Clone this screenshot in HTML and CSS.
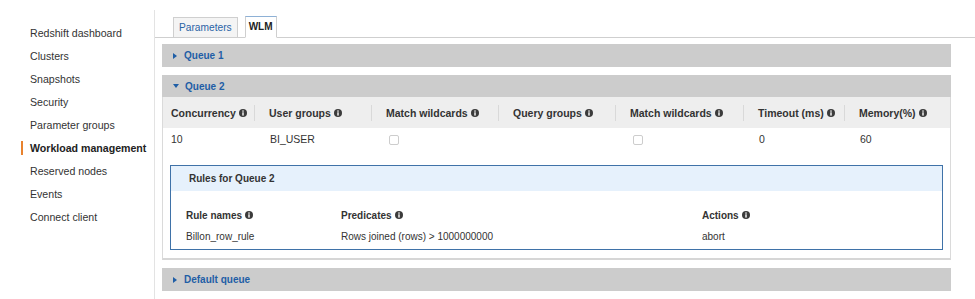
FILE: index.html
```html
<!DOCTYPE html>
<html>
<head>
<meta charset="utf-8">
<link rel="stylesheet" href="styles.css">
</head>
<body>
<nav class="sidebar">
  <div class="nav-item">Redshift dashboard</div>
  <div class="nav-item">Clusters</div>
  <div class="nav-item">Snapshots</div>
  <div class="nav-item">Security</div>
  <div class="nav-item">Parameter groups</div>
  <div class="nav-item active">Workload management</div>
  <div class="nav-item">Reserved nodes</div>
  <div class="nav-item">Events</div>
  <div class="nav-item">Connect client</div>
</nav>
<main class="main">
  <div class="tabs">
    <div class="tab">Parameters</div>
    <div class="tab tab-active">WLM</div>
  </div>
  <div class="content">
    <div class="qbar"><span class="tri-right"></span>Queue 1</div>

    <div class="panel">
      <div class="qbar qbar-in"><span class="tri-down"></span>Queue 2</div>
      <div class="qtable">
        <div class="th first">Concurrency<svg class="info" viewBox="0 0 8 8"><circle cx="4" cy="4" r="4" fill="#3b3b3b"/><rect x="3.3" y="1.4" width="1.4" height="1.3" fill="#fff"/><rect x="3.3" y="3.3" width="1.4" height="3.3" fill="#fff"/></svg></div>
        <div class="th">User groups<svg class="info" viewBox="0 0 8 8"><circle cx="4" cy="4" r="4" fill="#3b3b3b"/><rect x="3.3" y="1.4" width="1.4" height="1.3" fill="#fff"/><rect x="3.3" y="3.3" width="1.4" height="3.3" fill="#fff"/></svg></div>
        <div class="th">Match wildcards<svg class="info" viewBox="0 0 8 8"><circle cx="4" cy="4" r="4" fill="#3b3b3b"/><rect x="3.3" y="1.4" width="1.4" height="1.3" fill="#fff"/><rect x="3.3" y="3.3" width="1.4" height="3.3" fill="#fff"/></svg></div>
        <div class="th">Query groups<svg class="info" viewBox="0 0 8 8"><circle cx="4" cy="4" r="4" fill="#3b3b3b"/><rect x="3.3" y="1.4" width="1.4" height="1.3" fill="#fff"/><rect x="3.3" y="3.3" width="1.4" height="3.3" fill="#fff"/></svg></div>
        <div class="th">Match wildcards<svg class="info" viewBox="0 0 8 8"><circle cx="4" cy="4" r="4" fill="#3b3b3b"/><rect x="3.3" y="1.4" width="1.4" height="1.3" fill="#fff"/><rect x="3.3" y="3.3" width="1.4" height="3.3" fill="#fff"/></svg></div>
        <div class="th">Timeout (ms)<svg class="info" viewBox="0 0 8 8"><circle cx="4" cy="4" r="4" fill="#3b3b3b"/><rect x="3.3" y="1.4" width="1.4" height="1.3" fill="#fff"/><rect x="3.3" y="3.3" width="1.4" height="3.3" fill="#fff"/></svg></div>
        <div class="th">Memory(%)<svg class="info" viewBox="0 0 8 8"><circle cx="4" cy="4" r="4" fill="#3b3b3b"/><rect x="3.3" y="1.4" width="1.4" height="1.3" fill="#fff"/><rect x="3.3" y="3.3" width="1.4" height="3.3" fill="#fff"/></svg></div>

        <div class="td first">10</div>
        <div class="td">BI_USER</div>
        <div class="td"><span class="checkbox"></span></div>
        <div class="td"></div>
        <div class="td"><span class="checkbox"></span></div>
        <div class="td">0</div>
        <div class="td">60</div>
      </div>

      <div class="rules">
        <div class="rules-head">Rules for Queue 2</div>
        <div class="rules-grid">
          <div class="rh">Rule names<svg class="info" viewBox="0 0 8 8"><circle cx="4" cy="4" r="4" fill="#3b3b3b"/><rect x="3.3" y="1.4" width="1.4" height="1.3" fill="#fff"/><rect x="3.3" y="3.3" width="1.4" height="3.3" fill="#fff"/></svg></div>
          <div class="rh">Predicates<svg class="info" viewBox="0 0 8 8"><circle cx="4" cy="4" r="4" fill="#3b3b3b"/><rect x="3.3" y="1.4" width="1.4" height="1.3" fill="#fff"/><rect x="3.3" y="3.3" width="1.4" height="3.3" fill="#fff"/></svg></div>
          <div class="rh">Actions<svg class="info" viewBox="0 0 8 8"><circle cx="4" cy="4" r="4" fill="#3b3b3b"/><rect x="3.3" y="1.4" width="1.4" height="1.3" fill="#fff"/><rect x="3.3" y="3.3" width="1.4" height="3.3" fill="#fff"/></svg></div>
          <div class="rd">Billon_row_rule</div>
          <div class="rd">Rows joined (rows) &gt; 1000000000</div>
          <div class="rd">abort</div>
        </div>
      </div>
    </div>

    <div class="qbar"><span class="tri-right"></span>Default queue</div>
  </div>
</main>
</body>
</html>
```

FILE: styles.css
```css
html, body {
  margin: 0;
  padding: 0;
  background: #fff;
}
body {
  display: flex;
  font-family: "Liberation Sans", Arial, Helvetica, sans-serif;
  color: #333;
  height: 299px;
  overflow: hidden;
}
.sidebar {
  width: 154px;
  flex: none;
  margin-top: 10px;
  padding-top: 11px;
  border-right: 1px solid #e3e3e3;
}
.nav-item {
  display: flex;
  align-items: center;
  height: 23px;
  padding-left: 30px;
  font-size: 10.6px;
  color: #333;
}
.nav-item.active {
  font-weight: bold;
  color: #222;
}
.nav-item.active::before {
  content: "";
  width: 2px;
  height: 14px;
  background: #e8822e;
  margin-left: -9px;
  margin-right: 7px;
}
.main {
  flex: 1;
  min-width: 0;
}
.tabs {
  display: flex;
  align-items: flex-end;
  gap: 7px;
  height: 20px;
  padding: 17px 0 0 18px;
  border-bottom: 1px solid #cfcfcf;
}
.tab {
  height: 19px;
  line-height: 19px;
  padding: 0 5px;
  border: 1px solid #cfcfcf;
  border-bottom: none;
  background: #f4f4f4;
  color: #2a63a6;
  font-size: 10.2px;
}
.tab-active {
  height: 20px;
  line-height: 20px;
  padding: 0 3px;
  margin-bottom: -1px;
  border-top-color: #8eb1d6;
  border-bottom: 1px solid #fff;
  background: #fff;
  color: #222;
  font-weight: bold;
  font-size: 10px;
}
.content {
  padding: 6px 24px 0 7px;
  display: flex;
  flex-direction: column;
  gap: 8px;
}
.qbar {
  height: 23px;
  display: flex;
  align-items: center;
  padding-left: 11px;
  background: #cccccc;
  color: #1f5ea6;
  font-weight: bold;
  font-size: 10px;
}
.qbar-in {
  height: 22px;
  margin: 0 -1px;
}
.tri-right {
  width: 0;
  height: 0;
  border-top: 3px solid transparent;
  border-bottom: 3px solid transparent;
  border-left: 4px solid #1f5ea6;
  margin-right: 7px;
}
.tri-down {
  width: 0;
  height: 0;
  border-left: 3px solid transparent;
  border-right: 3px solid transparent;
  border-top: 4px solid #1f5ea6;
  margin-right: 6px;
}
.panel {
  border: 1px solid #dadada;
  border-top: none;
  border-bottom: 2px solid #d6d6d6;
  padding-bottom: 8px;
}
.qtable {
  display: grid;
  grid-template-columns: 91px 117px 127px 117px 128px 101px 1fr;
  grid-template-rows: 31px 22px;
  font-size: 10.5px;
}
.th {
  display: flex;
  align-items: center;
  background: #eeeeee;
  font-weight: bold;
  color: #333;
  white-space: nowrap;
}
.th::before {
  content: "";
  width: 1px;
  height: 16px;
  background: #d9d9d9;
  margin-right: 14px;
}
.th.first::before {
  display: none;
}
.th.first {
  padding-left: 8px;
}
.info {
  width: 8px;
  height: 8px;
  margin-left: 3px;
  flex: none;
}
.td {
  display: flex;
  align-items: center;
  padding-left: 16px;
  color: #333;
}
.td.first {
  padding-left: 8px;
}
.checkbox {
  display: inline-block;
  width: 8px;
  height: 8px;
  border: 1px solid #cdcdcd;
  border-radius: 2px;
  background: #fff;
  margin-left: 2px;
  margin-top: 1px;
}
.rules {
  margin: 15px 7px 0 7px;
  border: 1px solid #3f72a8;
}
.rules-head {
  height: 25px;
  display: flex;
  align-items: center;
  padding-left: 18px;
  background: #e6f1fc;
  font-weight: bold;
  font-size: 10px;
  color: #333;
}
.rules-grid {
  display: grid;
  grid-template-columns: 155px 361px 1fr;
  grid-template-rows: 35px 20px;
  padding: 0 0 3px 15px;
  font-size: 10px;
}
.rh {
  display: flex;
  align-items: center;
  padding-top: 13px;
  font-weight: bold;
  color: #333;
}
.rd {
  display: flex;
  align-items: center;
  color: #333;
}
```
